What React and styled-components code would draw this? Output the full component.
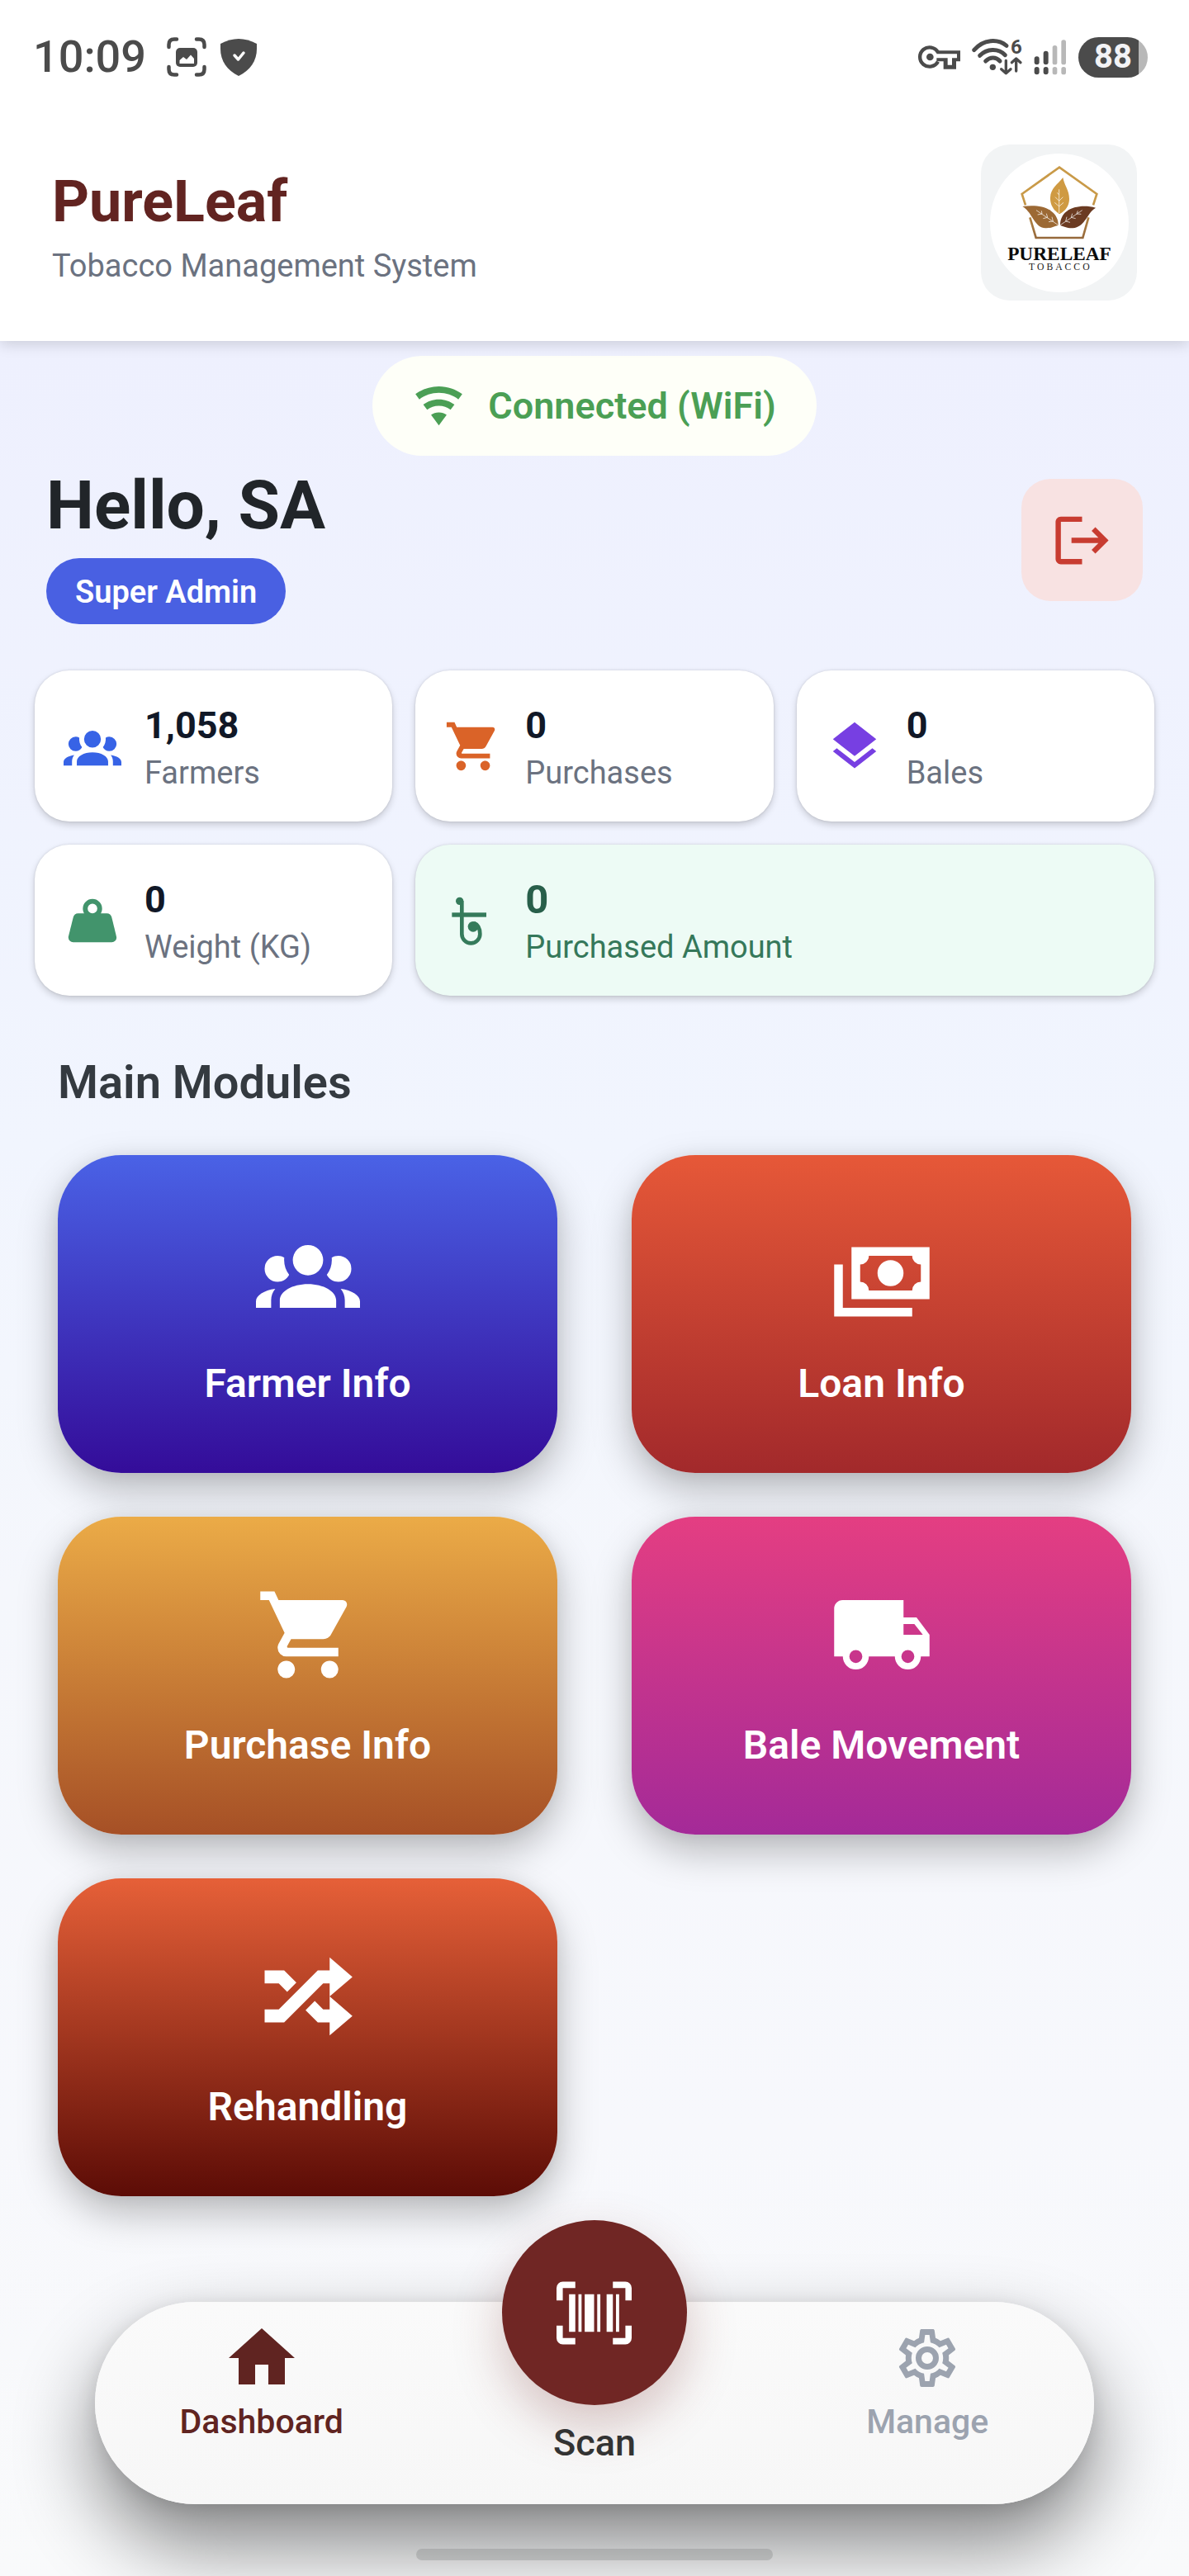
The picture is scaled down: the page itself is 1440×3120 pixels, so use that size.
import React from "react";
import styled, { createGlobalStyle } from "styled-components";

const GlobalStyle = createGlobalStyle`
  *, *::before, *::after { box-sizing: border-box; }
  body {
    margin: 0;
    background: #f8f9fb;
    font-family: Roboto, "Noto Sans", "Liberation Sans", sans-serif;
    overflow-x: hidden;
  }
  h1, h2, p { margin: 0; font-weight: inherit; }
  button { font: inherit; border: 0; padding: 0; cursor: pointer; }
  a { text-decoration: none; color: inherit; }
  svg { display: block; flex: none; overflow: visible; }
`;

const icons = {
  wifi: "M12,21L15.6,16.2C14.6,15.45 13.35,15 12,15C10.65,15 9.4,15.45 8.4,16.2L12,21M12,3C7.95,3 4.21,4.34 1.2,6.6L3,9C5.5,7.12 8.62,6 12,6C15.38,6 18.5,7.12 21,9L22.8,6.6C19.79,4.34 16.05,3 12,3M12,9C9.3,9 6.81,9.89 4.8,11.4L6.6,13.8C8.1,12.67 9.97,12 12,12C14.03,12 15.9,12.67 17.4,13.8L19.2,11.4C17.19,9.89 14.7,9 12,9Z",
  logout: "M17 7L15.59 8.41L18.17 11H8V13H18.17L15.59 15.58L17 17L22 12M4 5H12V3H4C2.9 3 2 3.9 2 5V19C2 20.1 2.9 21 4 21H12V19H4V5Z",
  group: "M12,5.5A3.5,3.5 0 0,1 15.5,9A3.5,3.5 0 0,1 12,12.5A3.5,3.5 0 0,1 8.5,9A3.5,3.5 0 0,1 12,5.5M5,8C5.56,8 6.08,8.15 6.53,8.42C6.38,9.85 6.8,11.27 7.66,12.38C7.16,13.34 6.16,14 5,14A3,3 0 0,1 2,11A3,3 0 0,1 5,8M19,8A3,3 0 0,1 22,11A3,3 0 0,1 19,14C17.84,14 16.84,13.34 16.34,12.38C17.2,11.27 17.62,9.85 17.47,8.42C17.92,8.15 18.44,8 19,8M5.5,18.25C5.5,16.18 8.41,14.5 12,14.5C15.59,14.5 18.5,16.18 18.5,18.25V20H5.5V18.25M0,20V18.5C0,17.11 1.89,15.94 4.45,15.6C3.86,16.28 3.5,17.22 3.5,18.25V20H0M24,20H20.5V18.25C20.5,17.22 20.14,16.28 19.55,15.6C22.11,15.94 24,17.11 24,18.5V20Z",
  cart: "M17,18C15.89,18 15,18.89 15,20A2,2 0 0,0 17,22A2,2 0 0,0 19,20C19,18.89 18.1,18 17,18M1,2V4H3L6.6,11.59L5.24,14.04C5.09,14.32 5,14.65 5,15A2,2 0 0,0 7,17H19V15H7.42A0.25,0.25 0 0,1 7.17,14.75C7.17,14.7 7.18,14.66 7.2,14.63L8.1,13H15.55C16.3,13 16.96,12.58 17.3,11.97L20.88,5.5C20.95,5.34 21,5.17 21,5A1,1 0 0,0 20,4H5.21L4.27,2M7,18C5.89,18 5,18.89 5,20A2,2 0 0,0 7,22A2,2 0 0,0 9,20C9,18.89 8.1,18 7,18Z",
  layers: "M12,16L19.36,10.27L21,9L12,2L3,9L4.63,10.27M12,18.54L4.62,12.81L3,14.07L12,21.07L21,14.07L19.37,12.8L12,18.54Z",
  weight: "M12,3A4,4 0 0,1 16,7C16,7.73 15.81,8.41 15.46,9H18C18.95,9 19.75,9.67 19.95,10.56C21.96,18.57 22,18.78 22,19A2,2 0 0,1 20,21H4A2,2 0 0,1 2,19C2,18.78 2.04,18.57 4.05,10.56C4.25,9.67 5.05,9 6,9H8.54C8.19,8.41 8,7.73 8,7A4,4 0 0,1 12,3M12,5A2,2 0 0,0 10,7A2,2 0 0,0 12,9A2,2 0 0,0 14,7A2,2 0 0,0 12,5Z",
  cash: "M5,6H23V18H5V6M14,9A3,3 0 0,1 17,12A3,3 0 0,1 14,15A3,3 0 0,1 11,12A3,3 0 0,1 14,9M9,8A2,2 0 0,1 7,10V14A2,2 0 0,1 9,16H19A2,2 0 0,1 21,14V10A2,2 0 0,1 19,8H9M1,10H3V20H19V22H1V10Z",
  truck: "M18,18.5A1.5,1.5 0 0,1 16.5,17A1.5,1.5 0 0,1 18,15.5A1.5,1.5 0 0,1 19.5,17A1.5,1.5 0 0,1 18,18.5M19.5,9.5L21.46,12H17V9.5M6,18.5A1.5,1.5 0 0,1 4.5,17A1.5,1.5 0 0,1 6,15.5A1.5,1.5 0 0,1 7.5,17A1.5,1.5 0 0,1 6,18.5M20,8H17V4H3C1.89,4 1,4.89 1,6V17H3A3,3 0 0,0 6,20A3,3 0 0,0 9,17H15A3,3 0 0,0 18,20A3,3 0 0,0 21,17H23V12L20,8Z",
  shuffle: "M17,3L22.25,7.5L17,12L22.25,16.5L17,21V18H14.26L11.44,15.18L13.56,13.06L15.5,15H17V12V9H15.5L6.5,18H2V15H5.26L14.26,6H17V3M2,6H6.5L9.32,8.82L7.2,10.94L5.26,9H2V6Z",
  home: "M10,20V14H14V20H19V12H22L12,3L2,12H5V20H10Z",
  cog: "M12,8A4,4 0 0,1 16,12A4,4 0 0,1 12,16A4,4 0 0,1 8,12A4,4 0 0,1 12,8M12,10A2,2 0 0,0 10,12A2,2 0 0,0 12,14A2,2 0 0,0 14,12A2,2 0 0,0 12,10M10,22C9.75,22 9.54,21.82 9.5,21.58L9.13,18.93C8.5,18.68 7.96,18.34 7.44,17.94L4.95,18.95C4.73,19.03 4.46,18.95 4.34,18.73L2.34,15.27C2.21,15.05 2.27,14.78 2.46,14.63L4.57,12.97L4.5,12L4.57,11L2.46,9.37C2.27,9.22 2.21,8.95 2.34,8.73L4.34,5.27C4.46,5.05 4.73,4.96 4.95,5.05L7.44,6.05C7.96,5.66 8.5,5.32 9.13,5.07L9.5,2.42C9.54,2.18 9.75,2 10,2H14C14.25,2 14.46,2.18 14.5,2.42L14.87,5.07C15.5,5.32 16.04,5.66 16.56,6.05L19.05,5.05C19.27,4.96 19.54,5.05 19.66,5.27L21.66,8.73C21.79,8.95 21.73,9.22 21.54,9.37L19.43,11L19.5,12L19.43,13L21.54,14.63C21.73,14.78 21.79,15.05 21.66,15.27L19.66,18.73C19.54,18.95 19.27,19.04 19.05,18.95L16.56,17.95C16.04,18.34 15.5,18.68 14.87,18.93L14.5,21.58C14.46,21.82 14.25,22 14,22H10M11.25,4L10.88,6.61C9.68,6.86 8.62,7.5 7.85,8.39L5.44,7.35L4.69,8.65L6.8,10.2C6.4,11.37 6.4,12.64 6.8,13.8L4.68,15.36L5.43,16.66L7.86,15.62C8.63,16.5 9.68,17.14 10.87,17.38L11.24,20H12.76L13.13,17.39C14.32,17.14 15.37,16.5 16.14,15.62L18.57,16.66L19.32,15.36L17.2,13.81C17.6,12.64 17.6,11.37 17.2,10.2L19.31,8.65L18.56,7.35L16.15,8.39C15.38,7.5 14.32,6.86 13.12,6.62L12.75,4H11.25Z",
  barcode: "M4,6H6V18H4V6M7,6H8V18H7V6M9,6H12V18H9V6M13,6H14V18H13V6M16,6H18V18H16V6M19,6H20V18H19V6M2,4V8H0V4A2,2 0 0,1 2,2H6V4H2M22,2A2,2 0 0,1 24,4V8H22V4H18V2H22M2,16V20H6V22H2A2,2 0 0,1 0,20V16H2M22,20V16H24V20A2,2 0 0,1 22,22H18V20H22Z",
};

const Icon = ({ name, size }) => (
  <svg width={size} height={size} viewBox="0 0 24 24" fill="currentColor" aria-hidden="true">
    <path d={icons[name]} />
  </svg>
);

const TakaIcon = ({ size }) => (
  <svg width={size} height={size} viewBox="24 28 210 210" fill="currentColor" aria-hidden="true">
    <rect x="52" y="104" width="125" height="16" />
    <circle cx="80" cy="62" r="14" />
    <circle cx="129" cy="155" r="19" />
    <path d="M88 62V182A33 33 0 0 0 154 182C154 162 148 148 132 142" fill="none" stroke="currentColor" strokeWidth="14" />
  </svg>
);

/* ---------- Status bar ---------- */

const StatusBar = styled.div`
  display: flex;
  align-items: center;
  justify-content: space-between;
  padding: 37px 50px 25px 40px;
  background: #fff;
  color: #4b4b4b;
`;
const StatusGroup = styled.div`
  display: flex;
  align-items: center;
  gap: ${(p) => p.$gap}px;
`;
const Clock = styled.time`
  font-size: 54px;
  line-height: 64px;
  font-weight: 500;
  margin-right: 8px;
`;
const Battery = styled.div`
  display: flex;
  align-items: center;
  justify-content: center;
  width: 84px;
  height: 49px;
  border-radius: 25px;
  background: linear-gradient(to right, #4b4b4b 87%, #b8b8b8 87%);
  color: #f3f3f5;
  font-size: 40px;
  line-height: 48px;
  font-weight: 700;
`;

const CaptureIcon = () => (
  <svg width="48" height="48" viewBox="0 0 48 48" fill="none" aria-hidden="true">
    <path d="M2.5 12V9Q2.5 2.500 9 2.500H12M36 2.500H39Q45.500 2.500 45.500 9V12M45.500 36V39Q45.500 45.500 39 45.500H36M12 45.500H9Q2.500 45.500 2.500 39V36" stroke="currentColor" strokeWidth="4.500" strokeLinecap="round" />
    <rect x="11" y="13" width="26" height="23" rx="5" fill="currentColor" />
    <path d="M15.500 32V28L20 24L24 27L29 21.500L33 26V32Z" fill="#fff" />
  </svg>
);
const ShieldIcon = () => (
  <svg width="44" height="45" viewBox="0 0 44 45" aria-hidden="true">
    <path d="M22 0C29 0 37 2 44 6V12C44 27 36 38 22 45C8 38 0 27 0 12V6C7 2 15 0 22 0Z" fill="currentColor" />
    <path d="M17 20L21.500 25L28 17" fill="none" stroke="#fff" strokeWidth="3.500" strokeLinecap="round" strokeLinejoin="round" />
  </svg>
);
const KeyIcon = () => (
  <svg width="51" height="30" viewBox="39 73 153 90" aria-hidden="true">
    <path d="M111 101A35 35 0 1 0 111 135" fill="none" stroke="currentColor" strokeWidth="13" />
    <path d="M106 95H192V134H177V162H131V134H106V122H146V147H162V122H180V107H106Z" fill="currentColor" />
    <circle cx="82" cy="118" r="13" fill="currentColor" />
  </svg>
);
const StatusWifiIcon = () => (
  <svg width="61" height="46" viewBox="236 46 183 138" fill="none" stroke="currentColor" strokeLinecap="round" aria-hidden="true">
    <path d="M244 90C278 50 330 48 362 74" strokeWidth="15" />
    <path d="M265 110C290 84 332 82 357 108" strokeWidth="15" />
    <path d="M286 130C302 114 324 114 338 130" strokeWidth="15" />
    <circle cx="312" cy="152" r="11" fill="currentColor" stroke="none" />
    <path d="M360 128V172M343 159L360 174L377 159M397 166V124M381 135L397 121L413 135" strokeWidth="10" strokeLinejoin="round" />
    <text x="377" y="104" fontSize="72" fontWeight="700" fill="currentColor" stroke="none">6</text>
  </svg>
);
const SignalIcon = () => (
  <svg width="40" height="43" viewBox="457 46 120 129" aria-hidden="true">
    <g fill="#4b4b4b">
      <rect x="459" y="107" width="18" height="30" rx="9" />
      <rect x="492" y="87" width="18" height="50" rx="9" />
      <rect x="459" y="145" width="18" height="28" rx="9" />
      <rect x="492" y="145" width="18" height="28" rx="9" />
    </g>
    <g fill="#b8b8b8">
      <rect x="525" y="67" width="17" height="70" rx="8" />
      <rect x="557" y="47" width="17" height="90" rx="8" />
      <rect x="525" y="145" width="17" height="28" rx="8" />
      <rect x="557" y="145" width="17" height="28" rx="8" />
    </g>
  </svg>
);

/* ---------- Header ---------- */

const Page = styled.div`
  display: flex;
  flex-direction: column;
  min-height: 100vh;
`;
const TopArea = styled.header`
  position: relative;
  z-index: 1;
  background: #fff;
  box-shadow: 0 4px 16px rgba(0, 0, 0, 0.15);
`;
const Brand = styled.div`
  display: flex;
  align-items: center;
  justify-content: space-between;
  padding: 49px 63px;
`;
const BrandName = styled.h1`
  font-size: 70px;
  line-height: 98px;
  font-weight: 700;
  color: #622421;
`;
const BrandTagline = styled.p`
  margin-top: 6px;
  font-size: 38px;
  line-height: 46px;
  color: #6b7280;
`;

const Logo = () => (
  <svg width="189" height="189" viewBox="24 29 567 567" role="img" aria-label="PureLeaf Tobacco">
    <defs>
      <linearGradient id="frame" x1="0" y1="0" x2="0" y2="1">
        <stop offset="0" stopColor="#c99a48" />
        <stop offset="0.450" stopColor="#c99a48" />
        <stop offset="1" stopColor="#96693c" />
      </linearGradient>
    </defs>
    <rect x="24" y="29" width="567" height="567" rx="105" fill="#f2f4f5" />
    <circle cx="309" cy="314" r="252" fill="#fff" />
    <path d="M186 249L173 209L309 112L445 209L432 249M415 294L394 368H224L202 294" fill="none" stroke="url(#frame)" strokeWidth="8" />
    <path d="M322 149C328 180 345 195 345 226C345 255 328 272 309 282C288 268 275 248 276 222C277 188 303 174 322 149Z" fill="#cf9a42" />
    <path d="M175 254C225 248 268 254 291 282C303 297 305 310 305 323C288 327 278 334 258 333C216 330 212 276 175 254Z" fill="#9c6934" />
    <path d="M441 259C395 246 345 256 325 282C314 297 312 310 312 323C325 326 336 334 358 333C405 328 408 278 441 259Z" fill="#6b3b22" />
    <g fill="none" stroke="#fff" strokeWidth="2.500" opacity="0.850">
      <path d="M308 278V192M308 234L294 220M308 234L322 220M308 254L292 240M308 254L324 240M308 212L301 204" />
      <path d="M305 322L225 268M246 281L244 270M246 281L230 284M266 294L262 280M266 294L250 298M286 308L282 292M286 308L270 310" />
      <path d="M312 322L392 268M372 281L376 270M372 281L388 282M352 294L356 280M352 294L368 298M332 308L336 292M332 308L348 312" />
    </g>
    <text x="309" y="450" textAnchor="middle" fontFamily="Liberation Serif, serif" fontWeight="700" fontSize="70" fill="#0c0c0c">PURELEAF</text>
    <text x="313" y="486" textAnchor="middle" fontFamily="Liberation Serif, serif" fontSize="35" letterSpacing="9" fill="#1a1a1a">TOBACCO</text>
  </svg>
);

/* ---------- Dashboard content ---------- */

const Content = styled.main`
  display: flex;
  flex-direction: column;
  flex: 1;
  padding-top: 18px;
  background: linear-gradient(to bottom, #eef0fe 0%, #f1f5fe 36%, #f5f7fc 56%, #f7f8fc 80%, #f9fafb 100%);
  overflow: hidden;
`;
const ConnectionPill = styled.div`
  align-self: center;
  display: flex;
  align-items: center;
  gap: 28px;
  height: 121px;
  padding: 0 49px;
  border-radius: 61px;
  background: #fefff8;
  color: #4b9f55;
  font-size: 45px;
  line-height: 58px;
  font-weight: 600;
`;
const Greeting = styled.section`
  display: flex;
  align-items: center;
  justify-content: space-between;
  padding: 0 56px;
`;
const GreetingName = styled.h2`
  font-size: 82px;
  line-height: 120px;
  font-weight: 700;
  color: #212529;
`;
const RoleBadge = styled.span`
  display: inline-block;
  margin-top: 4px;
  padding: 18px 35px 16px;
  border-radius: 42px;
  background: #4960e2;
  color: #fff;
  font-size: 38px;
  line-height: 46px;
  font-weight: 600;
  vertical-align: top;
`;
const LogoutButton = styled.button`
  display: grid;
  place-items: center;
  width: 147px;
  height: 148px;
  border-radius: 35px;
  background: #f8e2e2;
  color: #c83c31;
`;
const Stats = styled.section`
  display: grid;
  grid-template-columns: repeat(3, 1fr);
  gap: 28px;
  padding: 56px 42px 0;
`;
const StatCard = styled.div`
  display: flex;
  align-items: center;
  gap: 28px;
  height: 183px;
  padding: 0 35px;
  border-radius: 42px;
  grid-column: span ${(p) => (p.$wide ? 2 : 1)};
  background: ${(p) => (p.$wide ? "#edfbf5" : "#fff")};
  color: ${(p) => p.$icon};
  box-shadow: 0 4px 9px rgba(0, 0, 0, 0.17), 0 0 3px rgba(0, 0, 0, 0.12);
`;
const StatValue = styled.p`
  font-size: ${(p) => (p.$wide ? 49 : 45)}px;
  line-height: 62px;
  font-weight: 700;
  color: ${(p) => (p.$wide ? "#285f4a" : "#111827")};
`;
const StatLabel = styled.p`
  margin-top: 3px;
  font-size: 38px;
  line-height: 46px;
  color: ${(p) => (p.$wide ? "#35785a" : "#6b7280")};
`;
const SectionTitle = styled.h2`
  padding: 72px 70px 55px;
  font-size: 56px;
  line-height: 66px;
  font-weight: 600;
  color: #343a40;
`;
const Modules = styled.section`
  display: grid;
  grid-template-columns: 1fr 1fr;
  gap: 53px 90px;
  padding: 0 70px;
`;
const ModuleCard = styled.button`
  display: flex;
  flex-direction: column;
  align-items: center;
  justify-content: center;
  gap: 42px;
  height: 385px;
  border-radius: 77px;
  background: linear-gradient(to bottom, ${(p) => p.$from}, ${(p) => p.$to});
  color: #fff;
  font-size: 48px;
  line-height: 58px;
  font-weight: 600;
  box-shadow: 0 20px 48px rgba(0, 0, 0, 0.26), 0 0 20px rgba(0, 0, 0, 0.06);
`;

/* ---------- Bottom navigation ---------- */

const NavBar = styled.nav`
  display: grid;
  grid-template-columns: repeat(3, 1fr);
  height: 245px;
  margin: 128px 8% 0;
  border-radius: 123px;
  background: linear-gradient(to bottom, #fafafa, #f7f7f7);
  box-shadow: 0 48px 96px rgba(0, 0, 0, 0.48), 0 4px 24px rgba(0, 0, 0, 0.1);
`;
const NavItem = styled.a`
  display: flex;
  flex-direction: column;
  align-items: center;
  gap: 4px;
  padding-top: 20px;
  font-size: 41px;
  line-height: 50px;
  font-weight: 500;
  color: ${(p) => (p.$active ? "#602421" : "#9ca3af")};
`;
const NavIcon = styled.span`
  display: grid;
  place-items: center;
  height: 96px;
`;
const ScanButton = styled.button`
  display: flex;
  flex-direction: column;
  align-items: center;
  justify-self: center;
  align-self: start;
  gap: 19px;
  margin-top: -99px;
  background: none;
  color: #333;
  font-size: 45px;
  line-height: 54px;
  font-weight: 500;
`;
const ScanCircle = styled.span`
  display: grid;
  place-items: center;
  width: 224px;
  height: 224px;
  border-radius: 50%;
  background: #702624;
  color: #fff;
  box-shadow: 0 24px 60px rgba(112, 38, 36, 0.26);
`;
const HomeIndicator = styled.div`
  align-self: center;
  width: 30%;
  height: 14px;
  margin: 54px 0 19px;
  border-radius: 7px;
  background: rgba(120, 122, 122, 0.3);
`;

const stats = [
  { icon: "group", color: "#3763e6", value: "1,058", label: "Farmers" },
  { icon: "cart", color: "#da6328", value: "0", label: "Purchases" },
  { icon: "layers", color: "#773fe2", value: "0", label: "Bales" },
  { icon: "weight", color: "#42946c", value: "0", label: "Weight (KG)" },
  { icon: "taka", color: "#357b5b", value: "0", label: "Purchased Amount", wide: true },
];

const modules = [
  { icon: "group", label: "Farmer Info", from: "#4a62e6", to: "#340c99" },
  { icon: "cash", label: "Loan Info", from: "#e65838", to: "#a2292b" },
  { icon: "cart", label: "Purchase Info", from: "#ebab47", to: "#a65026" },
  { icon: "truck", label: "Bale Movement", from: "#e43e82", to: "#a42a98" },
  { icon: "shuffle", label: "Rehandling", from: "#e66038", to: "#5c0c06" },
];

export default function App() {
  return (
    <Page>
      <GlobalStyle />
      <TopArea>
        <StatusBar>
          <StatusGroup $gap={17}>
            <Clock>10:09</Clock>
            <CaptureIcon />
            <ShieldIcon />
          </StatusGroup>
          <StatusGroup $gap={14}>
            <KeyIcon />
            <StatusWifiIcon />
            <SignalIcon />
            <Battery>88</Battery>
          </StatusGroup>
        </StatusBar>
        <Brand>
          <div>
            <BrandName>PureLeaf</BrandName>
            <BrandTagline>Tobacco Management System</BrandTagline>
          </div>
          <Logo />
        </Brand>
      </TopArea>

      <Content>
        <ConnectionPill>
          <Icon name="wifi" size={63} />
          <span>Connected (WiFi)</span>
        </ConnectionPill>

        <Greeting>
          <div>
            <GreetingName>Hello, SA</GreetingName>
            <RoleBadge>Super Admin</RoleBadge>
          </div>
          <LogoutButton type="button" aria-label="Log out">
            <Icon name="logout" size={77} />
          </LogoutButton>
        </Greeting>

        <Stats>
          {stats.map((s) => (
            <StatCard key={s.label} $wide={s.wide} $icon={s.color}>
              {s.icon === "taka" ? <TakaIcon size={70} /> : <Icon name={s.icon} size={70} />}
              <div>
                <StatValue $wide={s.wide}>{s.value}</StatValue>
                <StatLabel $wide={s.wide}>{s.label}</StatLabel>
              </div>
            </StatCard>
          ))}
        </Stats>

        <SectionTitle>Main Modules</SectionTitle>
        <Modules>
          {modules.map((m) => (
            <ModuleCard key={m.label} type="button" $from={m.from} $to={m.to}>
              <Icon name={m.icon} size={126} />
              <span>{m.label}</span>
            </ModuleCard>
          ))}
        </Modules>

        <NavBar>
          <NavItem href="#dashboard" $active>
            <NavIcon><Icon name="home" size={96} /></NavIcon>
            <span>Dashboard</span>
          </NavItem>
          <ScanButton type="button">
            <ScanCircle><Icon name="barcode" size={91} /></ScanCircle>
            <span>Scan</span>
          </ScanButton>
          <NavItem href="#manage">
            <NavIcon><Icon name="cog" size={84} /></NavIcon>
            <span>Manage</span>
          </NavItem>
        </NavBar>
        <HomeIndicator />
      </Content>
    </Page>
  );
}
